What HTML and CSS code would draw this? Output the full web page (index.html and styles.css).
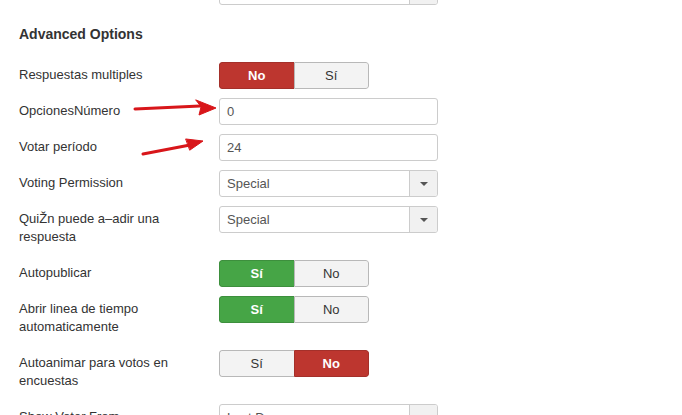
FILE: index.html
```html
<!DOCTYPE html>
<html lang="es">
<head>
<meta charset="utf-8">
<link rel="stylesheet" href="styles.css">
</head>
<body>
<div class="page">
  <div class="form">
    <div class="row">
      <div class="label"></div>
      <div class="select"><span class="select-text"></span><span class="select-btn"><span class="caret"></span></span></div>
    </div>

    <h3 class="heading">Advanced Options</h3>

    <div class="row">
      <div class="label">Respuestas multiples</div>
      <div class="toggle"><span class="opt danger">No</span><span class="opt">Sí</span></div>
    </div>
    <div class="row">
      <div class="label">OpcionesNúmero</div>
      <div class="input">0</div>
    </div>
    <div class="row">
      <div class="label">Votar período</div>
      <div class="input">24</div>
    </div>
    <div class="row">
      <div class="label">Voting Permission</div>
      <div class="select"><span class="select-text">Special</span><span class="select-btn"><span class="caret"></span></span></div>
    </div>
    <div class="row">
      <div class="label">QuiŽn puede a–adir una respuesta</div>
      <div class="select"><span class="select-text">Special</span><span class="select-btn"><span class="caret"></span></span></div>
    </div>
    <div class="row">
      <div class="label">Autopublicar</div>
      <div class="toggle"><span class="opt success">Sí</span><span class="opt">No</span></div>
    </div>
    <div class="row">
      <div class="label">Abrir linea de tiempo automaticamente</div>
      <div class="toggle"><span class="opt success">Sí</span><span class="opt">No</span></div>
    </div>
    <div class="row">
      <div class="label">Autoanimar para votos en encuestas</div>
      <div class="toggle"><span class="opt">Sí</span><span class="opt danger">No</span></div>
    </div>
    <div class="row">
      <div class="label">Show Voter From</div>
      <div class="select"><span class="select-text">Last Day</span><span class="select-btn"><span class="caret"></span></span></div>
    </div>
  </div>

  <svg class="arrows" width="682" height="415" viewBox="0 0 682 415">
    <g fill="#d8161a" stroke="#d8161a" stroke-linecap="round">
      <line x1="135" y1="109" x2="200" y2="106" stroke-width="3"/>
      <polygon points="196,100 216,108 199,115 201,107" stroke-width="1"/>
      <line x1="143" y1="154" x2="190" y2="145" stroke-width="3"/>
      <polygon points="186,139 203,141 190,150" stroke-width="1"/>
    </g>
  </svg>
</div>
</body>
</html>
```

FILE: styles.css
```css
html, body {
  margin: 0;
  padding: 0;
  background: #ffffff;
}

.page {
  position: relative;
  width: 682px;
  height: 415px;
  overflow: hidden;
  font-family: "Liberation Sans", Arial, sans-serif;
  font-size: 13px;
  color: #333333;
}

.form {
  padding: 0 19px;
  margin-top: -22px;
}

.row {
  display: flex;
  align-items: flex-start;
  margin-bottom: 9px;
}

.label {
  width: 184px;
  flex: 0 0 184px;
  margin-right: 16px;
  padding: 4px 0 5px;
  line-height: 18px;
  min-height: 18px;
}

.heading {
  margin: 20px 0 19px;
  font-size: 14px;
  line-height: 18px;
  font-weight: bold;
  color: #333333;
}

.toggle {
  display: flex;
  width: 150px;
  height: 27px;
  box-sizing: border-box;
  border-radius: 3px;
  overflow: hidden;
}

.opt {
  flex: 1;
  display: flex;
  align-items: center;
  justify-content: center;
  background: #f3f3f3;
  border: 1px solid #b8b8b8;
  color: #333333;
  line-height: 18px;
}

.opt:first-child {
  border-radius: 3px 0 0 3px;
  border-right: none;
}

.opt:last-child {
  border-radius: 0 3px 3px 0;
}

.opt.danger {
  background: #bd362f;
  border-color: #a4302a;
  color: #ffffff;
  font-weight: bold;
}

.opt.success {
  background: #46a546;
  border-color: #3d8f3d;
  color: #ffffff;
  font-weight: bold;
}

.input, .select {
  width: 219px;
  height: 27px;
  box-sizing: border-box;
  border: 1px solid #cccccc;
  border-radius: 3px;
  color: #555555;
  background: #ffffff;
}

.input {
  padding: 4px 7px;
  line-height: 18px;
}

.select {
  display: flex;
}

.select-text {
  flex: 1;
  padding: 4px 7px;
  line-height: 18px;
}

.select-btn {
  width: 27px;
  flex: 0 0 27px;
  background: #f1f1f1;
  border-left: 1px solid #cccccc;
  border-radius: 0 2px 2px 0;
  display: flex;
  align-items: center;
  justify-content: center;
}

.caret {
  width: 0;
  height: 0;
  border-left: 4px solid transparent;
  border-right: 4px solid transparent;
  border-top: 4px solid #555555;
}

.arrows {
  position: absolute;
  left: 0;
  top: 0;
  pointer-events: none;
}
```
